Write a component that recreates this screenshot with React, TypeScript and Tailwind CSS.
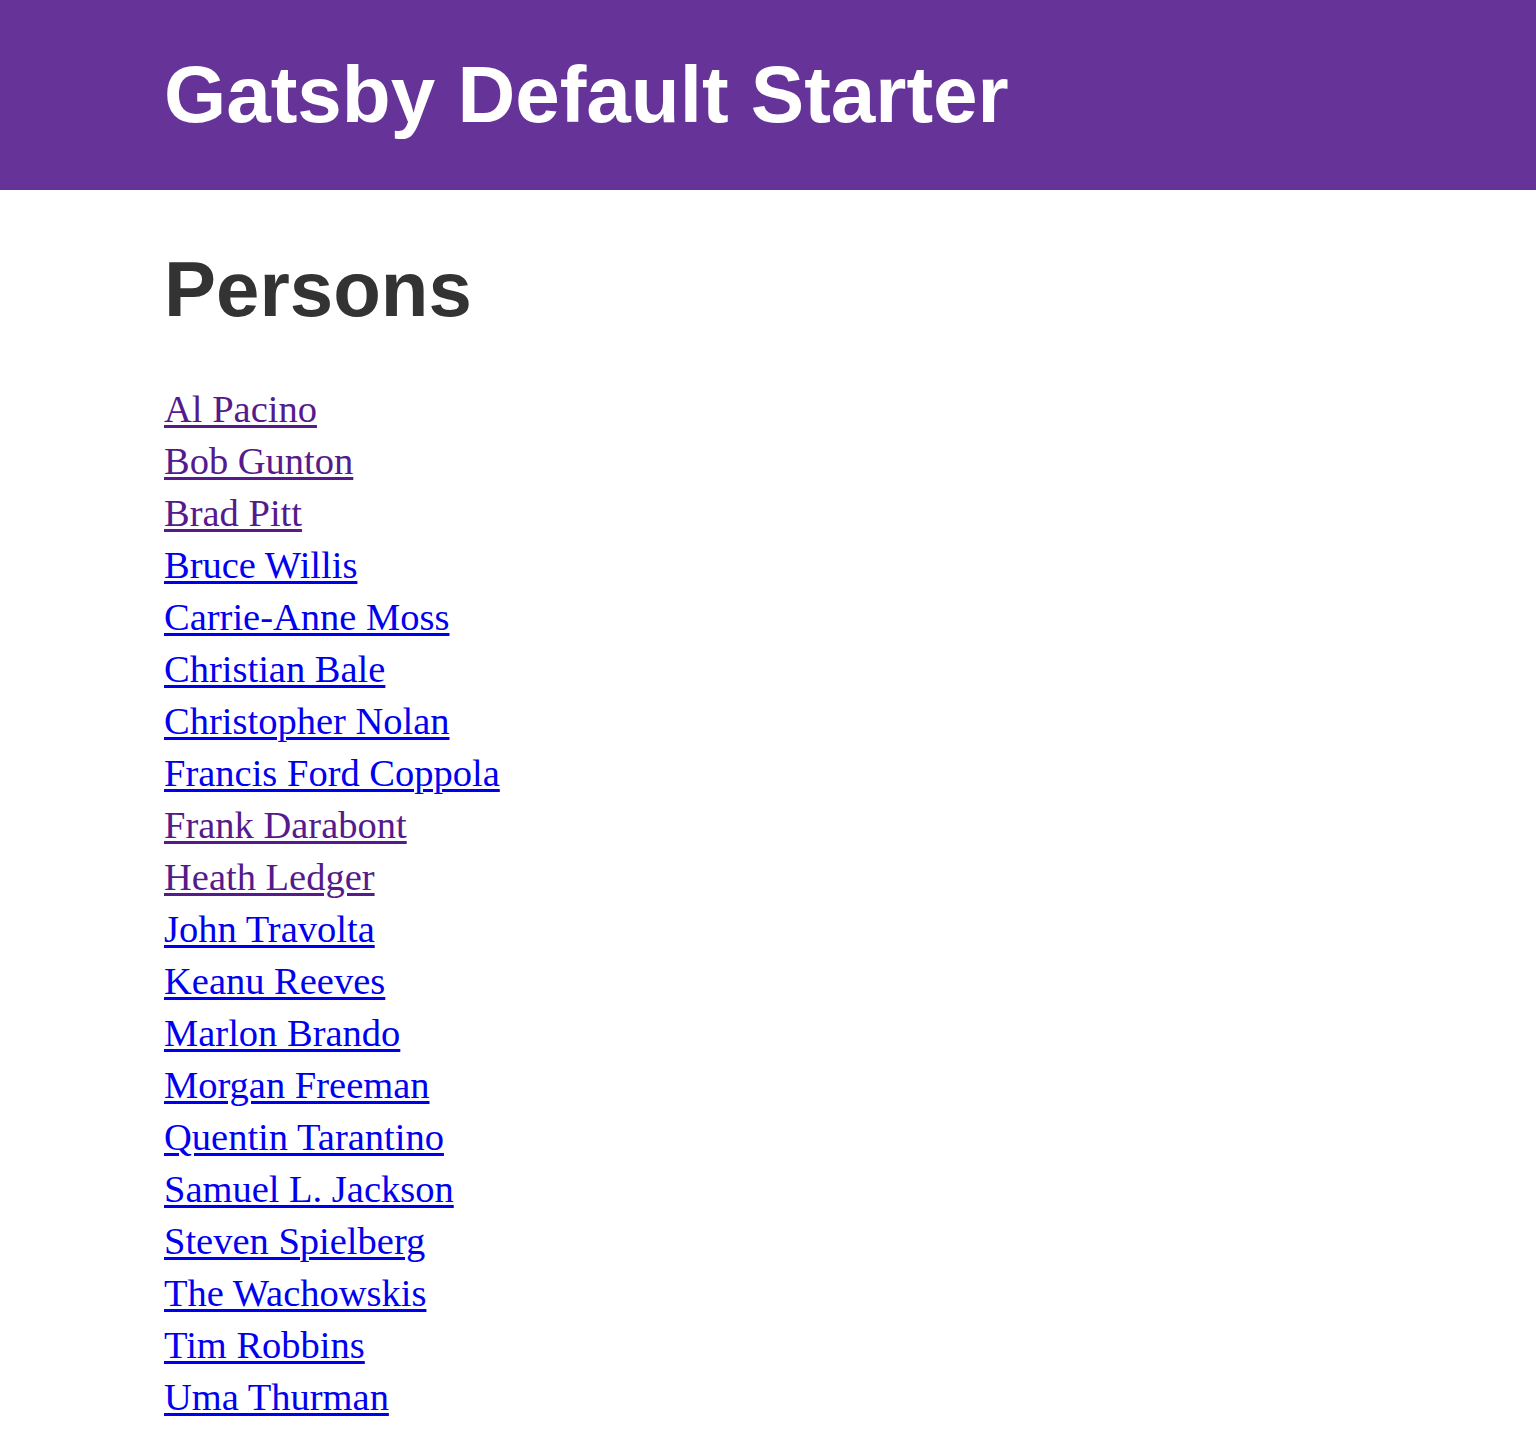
import React from "react";

const persons = [
  { name: "Al Pacino", visited: true },
  { name: "Bob Gunton", visited: true },
  { name: "Brad Pitt", visited: true },
  { name: "Bruce Willis", visited: false },
  { name: "Carrie-Anne Moss", visited: false },
  { name: "Christian Bale", visited: false },
  { name: "Christopher Nolan", visited: false },
  { name: "Francis Ford Coppola", visited: false },
  { name: "Frank Darabont", visited: true },
  { name: "Heath Ledger", visited: true },
  { name: "John Travolta", visited: false },
  { name: "Keanu Reeves", visited: false },
  { name: "Marlon Brando", visited: false },
  { name: "Morgan Freeman", visited: false },
  { name: "Quentin Tarantino", visited: false },
  { name: "Samuel L. Jackson", visited: false },
  { name: "Steven Spielberg", visited: false },
  { name: "The Wachowskis", visited: false },
  { name: "Tim Robbins", visited: false },
  { name: "Uma Thurman", visited: false },
];

const App = () => {
  return (
    <div className="min-h-[1440px] bg-white">
      <header className="bg-[#663399] px-[164px] py-[51px]">
        <h1 className="font-['Liberation_Sans',Arial,sans-serif] text-[80px] font-bold leading-[88px] text-white">
          Gatsby Default Starter
        </h1>
      </header>

      <main className="px-[164px] pt-[55px]">
        <h1 className="font-['Liberation_Sans',Arial,sans-serif] text-[78px] font-bold leading-[88px] text-[#333333]">
          Persons
        </h1>
        <ul className="mt-[50px] font-['Liberation_Serif','Times_New_Roman',serif] text-[38.5px] leading-[52px]">
          {persons.map((p) => (
            <li key={p.name}>
              <a
                href="#"
                className={
                  "underline decoration-[2.5px] underline-offset-[3px] " +
                  (p.visited ? "text-[#551a8b]" : "text-[#0000ee]")
                }
              >
                {p.name}
              </a>
            </li>
          ))}
        </ul>
      </main>
    </div>
  );
};

export default App;
